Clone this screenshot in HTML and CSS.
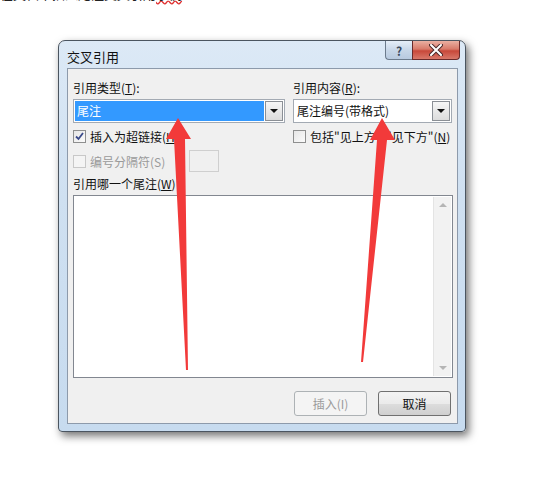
FILE: index.html
```html
<!DOCTYPE html>
<html lang="zh-CN">
<head>
  <meta charset="UTF-8">
  <title>交叉引用</title>
  <link rel="stylesheet" href="styles.css">
</head>
<body>
  <div class="page">
    <p class="doc-line">在文档中插入尾注交叉引用<span class="typo">示例</span></p>

    <div class="window">
      <div class="titlebar">
        <span class="title">交叉引用</span>
        <div class="caption-btns">
          <span class="cap help">?</span>
          <span class="cap close">
            <svg width="14" height="12" viewBox="0 0 14 12">
              <path d="M2 1 L12 11 M12 1 L2 11" stroke="#4a2a2a" stroke-width="4" stroke-linecap="round"/>
              <path d="M2 1 L12 11 M12 1 L2 11" stroke="#fff" stroke-width="2" stroke-linecap="round"/>
            </svg>
          </span>
        </div>
      </div>

      <div class="client">
        <div class="cols">
          <div class="col left">
            <label class="lbl">引用类型(<u>T</u>):</label>
            <div class="combo">
              <span class="combo-val selected">尾注</span>
              <span class="drop"><i class="tri"></i></span>
            </div>
            <div class="check-row">
              <span class="chk checked">
                <svg width="11" height="11" viewBox="0 0 11 11"><path d="M2 5.5 L4.5 8 L9 2" fill="none" stroke="#3a4a8a" stroke-width="1.8"/></svg>
              </span>
              <span>插入为超链接(<u>H</u>)</span>
            </div>
            <div class="check-row disabled">
              <span class="chk"></span>
              <span>编号分隔符(S)</span>
              <span class="sep-field"></span>
            </div>
          </div>
          <div class="col right">
            <label class="lbl">引用内容(<u>R</u>):</label>
            <div class="combo">
              <span class="combo-val">尾注编号(带格式)</span>
              <span class="drop"><i class="tri"></i></span>
            </div>
            <div class="check-row">
              <span class="chk"></span>
              <span>包括"见上方"/"见下方"(<u>N</u>)</span>
            </div>
          </div>
        </div>

        <label class="lbl list-lbl">引用哪一个尾注(<u>W</u>)</label>
        <div class="listbox">
          <div class="list-items"></div>
          <div class="vscroll">
            <i class="sarrow up"></i>
            <i class="sarrow down"></i>
          </div>
        </div>

        <div class="actions">
          <button class="btn" disabled>插入(I)</button>
          <button class="btn">取消</button>
        </div>
      </div>
    </div>

    <!-- annotation arrows drawn over the screenshot -->
    <svg class="marks" width="542" height="489" viewBox="0 0 542 489">
      <path d="M178 118 L166 139 L174 139 L186 370 L188 370 L185 139 L191 139 Z" fill="#f23a3a"/>
      <path d="M382 118 L370 140 L377 140 L361 362 L363 362 L387 140 L395 140 Z" fill="#f23a3a"/>
    </svg>
  </div>
</body>
</html>
```

FILE: styles.css
```css
body {
  margin: 0;
  background: #fff;
  font-family: "Noto Sans CJK SC", "DejaVu Sans", sans-serif;
  font-size: 12px;
  color: #000;
}

.page {
  position: relative;
  width: 542px;
  height: 489px;
  overflow: hidden;
}

.doc-line {
  margin: -13px 0 0 0;
  height: 14px;
  line-height: 14px;
  font-size: 13px;
  color: #222;
}

.typo {
  text-decoration: underline wavy #e03030;
}

.window {
  margin: 39px 0 0 58px;
  width: 406px;
  height: 390px;
  border: 1px solid #4b5560;
  border-radius: 7px 7px 4px 4px;
  background: linear-gradient(#dce9f6, #cfe0f1 40%, #c7dbef);
  box-shadow: 3px 4px 9px rgba(0, 0, 0, 0.55);
  display: flex;
  flex-direction: column;
}

.titlebar {
  height: 27px;
  display: flex;
  align-items: flex-start;
  justify-content: space-between;
  padding-left: 8px;
}

.title {
  margin-top: 6px;
  font-size: 13px;
  color: #111;
}

.caption-btns {
  display: flex;
  margin-right: 5px;
}

.cap {
  height: 18px;
  display: flex;
  align-items: center;
  justify-content: center;
  border: 1px solid #6c7b8c;
  border-top: none;
}

.help {
  width: 26px;
  border-radius: 0 0 0 4px;
  border-right: none;
  background: linear-gradient(#e5eef8, #c8d7e8 50%, #b8cadf);
  color: #3a4a5c;
  font-size: 12px;
  font-weight: bold;
}

.close {
  width: 46px;
  border-radius: 0 0 4px 0;
  border-color: #6a2a2a;
  background: linear-gradient(#eab0a2, #d87a6a 45%, #c8483a 55%, #d8786a);
}

.client {
  flex: 1;
  margin: 0 7px 7px 8px;
  border: 1px solid #8d9aab;
  background: #f0f0f0;
  padding: 11px 5px 7px 5px;
  display: flex;
  flex-direction: column;
}

.cols {
  display: flex;
  gap: 8px;
}

.col.left {
  width: 212px;
}

.col.right {
  width: 159px;
}

.lbl {
  display: block;
  height: 16px;
  line-height: 16px;
  color: #111;
}

.combo {
  margin-top: 3px;
  height: 24px;
  box-sizing: border-box;
  border: 1px solid #a3aab3;
  background: #fff;
  display: flex;
  align-items: stretch;
  padding: 1px;
}

.combo-val {
  flex: 1;
  line-height: 20px;
  padding-left: 2px;
  color: #111;
}

.combo-val.selected {
  background: #3399ff;
  color: #fff;
}

.drop {
  width: 16px;
  margin-left: 1px;
  border: 1px solid #8b8f95;
  background: linear-gradient(#f6f6f6, #dcdcdc);
  display: flex;
  align-items: center;
  justify-content: center;
}

.tri {
  width: 0;
  height: 0;
  border-left: 4px solid transparent;
  border-right: 4px solid transparent;
  border-top: 4px solid #111;
}

.check-row {
  margin-top: 5px;
  height: 17px;
  display: flex;
  align-items: center;
  gap: 4px;
  color: #111;
  white-space: nowrap;
}

.check-row.disabled {
  margin-top: 5px;
  height: 22px;
  color: #9a9a9a;
}

.chk {
  width: 11px;
  height: 11px;
  border: 1px solid #8e8f8f;
  background: linear-gradient(135deg, #e6e6e6, #fbfbfb);
  display: flex;
  align-items: center;
  justify-content: center;
}

.disabled .chk {
  border-color: #c8c8c8;
  background: #f4f4f4;
}

.sep-field {
  margin-left: 20px;
  width: 28px;
  height: 20px;
  border: 1px solid #cfcfcf;
  background: #f0f0f0;
}

.list-lbl {
  margin-top: 4px;
}

.listbox {
  margin-top: 3px;
  height: 183px;
  width: 380px;
  box-sizing: border-box;
  border: 1px solid #828790;
  background: #fff;
  display: flex;
}

.list-items {
  flex: 1;
}

.vscroll {
  width: 17px;
  margin: 1px 1px 1px 0;
  background: #f2f2f2;
  border-left: 1px solid #e4e4e4;
  display: flex;
  flex-direction: column;
  justify-content: space-between;
  align-items: center;
  padding: 6px 0;
}

.sarrow {
  width: 0;
  height: 0;
  border-left: 4px solid transparent;
  border-right: 4px solid transparent;
}

.sarrow.up {
  border-bottom: 4px solid #b5b5b5;
}

.sarrow.down {
  border-top: 4px solid #b5b5b5;
}

.actions {
  margin-top: 13px;
  display: flex;
  justify-content: flex-end;
  gap: 11px;
  padding-right: 1px;
}

.btn {
  width: 73px;
  height: 25px;
  border: 1px solid #707070;
  border-radius: 3px;
  background: linear-gradient(#f3f3f3, #ebebeb 50%, #dddddd 51%, #cfcfcf);
  font-family: "Noto Sans CJK SC", sans-serif;
  font-size: 12px;
  color: #111;
  padding: 0;
}

.btn:disabled {
  border-color: #adb2b5;
  background: #f4f4f4;
  color: #9a9a9a;
}

.marks {
  position: absolute;
  left: 0;
  top: 0;
}
```
